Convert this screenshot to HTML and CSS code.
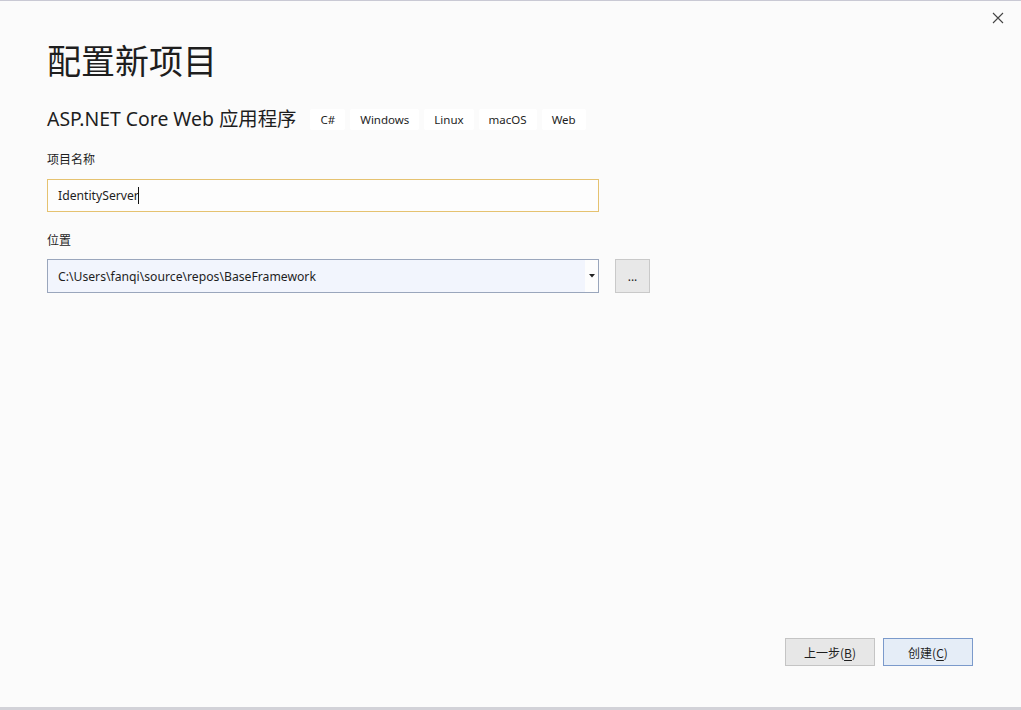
FILE: index.html
```html
<!DOCTYPE html>
<html lang="zh-CN">
<head>
<meta charset="utf-8">
<title>配置新项目</title>
<link rel="stylesheet" href="styles.css">
</head>
<body>
<div class="window">
  <div class="titlebar">
    <button class="close" aria-label="关闭">
      <svg width="12" height="12" viewBox="0 0 12 12"><path d="M1 1 L11 11 M11 1 L1 11" stroke="#444" stroke-width="1.1" fill="none"/></svg>
    </button>
  </div>
  <div class="content">
    <h1 class="title">配置新项目</h1>
    <div class="subtitle-row">
      <span class="subtitle">ASP.NET Core Web 应用程序</span>
      <div class="tags">
        <span class="tag">C#</span>
        <span class="tag">Windows</span>
        <span class="tag">Linux</span>
        <span class="tag">macOS</span>
        <span class="tag">Web</span>
      </div>
    </div>
    <label class="label">项目名称</label>
    <div class="input name-input"><span>IdentityServer</span><span class="caret"></span></div>
    <label class="label loc-label">位置</label>
    <div class="loc-row">
      <div class="combo">
        <span class="combo-text">C:\Users\fanqi\source\repos\BaseFramework</span>
        <span class="combo-arrow"><svg width="6" height="4" viewBox="0 0 6 4"><path d="M0 0 H6 L3 3.5 Z" fill="#222"/></svg></span>
      </div>
      <button class="browse">...</button>
    </div>
  </div>
  <div class="footer">
    <button class="btn">上一步(<u>B</u>)</button>
    <button class="btn primary">创建(<u>C</u>)</button>
  </div>
</div>
</body>
</html>
```
FILE: styles.css
```css
* { box-sizing: border-box; }
html, body { margin: 0; padding: 0; }
body {
  background: #fbfbfb;
  font-family: "Noto Sans", "Noto Sans CJK SC", sans-serif;
  color: #1e1e1e;
}
.window {
  width: 1021px;
  height: 710px;
  border-top: 1px solid #c9c9d4;
  border-bottom: 3px solid #d2d2d8;
  display: flex;
  flex-direction: column;
  position: relative;
}
.titlebar {
  display: flex;
  justify-content: flex-end;
  padding: 10px 17px 0 0;
  height: 35px;
}
.close {
  width: 12px;
  height: 14px;
  padding: 0;
  border: none;
  background: none;
  display: flex;
  align-items: center;
  justify-content: center;
}
.content {
  padding: 0 0 0 47px;
  flex: 1;
}
.title {
  margin: 0;
  font-family: "Noto Sans CJK SC", sans-serif;
  font-weight: 400;
  font-size: 34px;
  line-height: 48px;
  color: #1e1e1e;
}
.subtitle-row {
  display: flex;
  align-items: center;
  margin-top: 23px;
  height: 24px;
}
.subtitle {
  font-family: "Noto Sans", "Noto Sans CJK SC", sans-serif;
  font-size: 19.4px;
  color: #1e1e1e;
  line-height: 24px;
}
.tags {
  display: flex;
  gap: 5px;
  margin-left: 14px;
}
.tag {
  background: #ffffff;
  font-size: 11.5px;
  line-height: 21px;
  padding: 0 10px;
  color: #1e1e1e;
  border-radius: 2px;
}
.label {
  display: block;
  font-family: "Noto Sans CJK SC", sans-serif;
  font-size: 12px;
  line-height: 16px;
  margin-top: 20px;
  color: #1e1e1e;
}
.input {
  width: 552px;
  height: 33px;
  margin-top: 12px;
  border: 1px solid #e5c270;
  background: #fdfdfd;
  display: flex;
  align-items: center;
  padding-left: 10px;
  font-size: 12.2px;
  color: #1e1e1e;
}
.caret {
  display: inline-block;
  width: 1px;
  height: 17px;
  background: #111;
  margin-left: -1px;
}
.loc-label { margin-top: 20px; }
.loc-row {
  display: flex;
  gap: 16px;
  margin-top: 11px;
}
.combo {
  width: 552px;
  height: 34px;
  border: 1px solid #9aa6bc;
  background: #f2f5fd;
  display: flex;
  align-items: center;
  justify-content: space-between;
  font-size: 12.2px;
}
.combo-text { padding-left: 10px; }
.combo-arrow {
  width: 13px;
  height: 100%;
  background: #fdfdfd;
  display: flex;
  align-items: center;
  justify-content: center;
}
.browse {
  width: 35px;
  height: 34px;
  border: 1px solid #c9c9c9;
  background: #e8e8e8;
  font-family: "Noto Sans", sans-serif;
  font-size: 12px;
  color: #1e1e1e;
  padding: 0;
}
.footer {
  display: flex;
  justify-content: flex-end;
  gap: 8px;
  padding: 0 48px 41px 0;
}
.btn {
  width: 90px;
  height: 28px;
  border: 1px solid #c4c4c4;
  background: #e7e7e7;
  font-family: "Noto Sans CJK SC", sans-serif;
  font-size: 12px;
  color: #1e1e1e;
  padding: 0;
}
.btn u { text-underline-offset: 2px; }
.btn.primary {
  background: #e5edf7;
  border-color: #7b9acb;
}
```
